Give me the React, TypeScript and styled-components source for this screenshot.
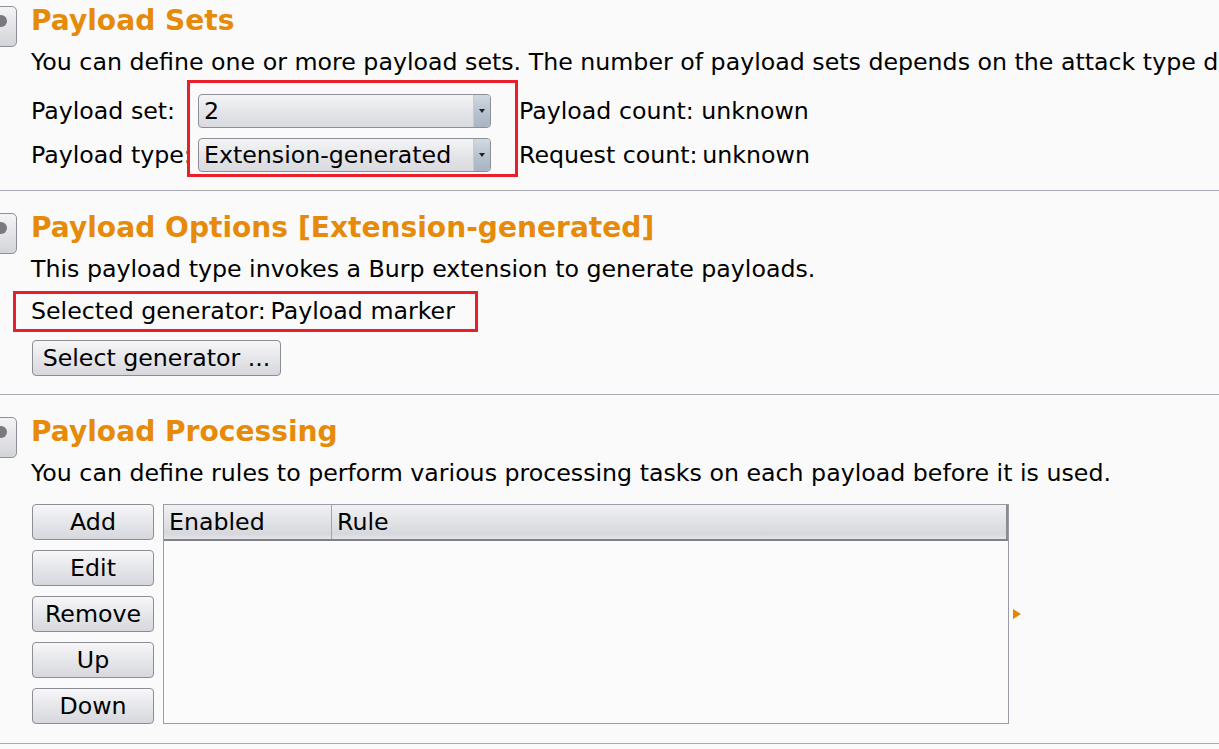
import React from "react";
import styled, { createGlobalStyle } from "styled-components";

const Global = createGlobalStyle`
  html, body {
    margin: 0;
    padding: 0;
    background: #fafafa;
    overflow: hidden;
  }
  body {
    font-family: "DejaVu Sans", Verdana, sans-serif;
    font-size: 23.7px;
    color: #000;
  }
`;

const Page = styled.div`
  width: 1219px;
  height: 749px;
  background: #fafafa;
  overflow: hidden;
  display: flex;
  flex-direction: column;
`;

const Section = styled.section<{ $top: number; $bottom: number }>`
  display: flex;
  flex-direction: column;
  align-items: flex-start;
  padding: ${(p) => p.$top}px 0 ${(p) => p.$bottom}px 31px;
  border-bottom: 1px solid #a8aab3;
`;

const HeaderRow = styled.div`
  display: flex;
  align-items: flex-start;
  height: 34px;
  margin-left: -54px;
`;

const HelpIcon = styled.div`
  width: 40px;
  height: 41px;
  margin-top: 2px;
  box-sizing: border-box;
  border: 1px solid #8e8f98;
  border-radius: 5px;
  background: linear-gradient(#f4f4f6, #d3d4d9);
  display: flex;
  padding: 8px 0 0 17px;
  flex-shrink: 0;
`;

const HelpDot = styled.span`
  width: 12px;
  height: 12px;
  border-radius: 50%;
  background: #7a7a7e;
`;

const Title = styled.h2`
  margin: 0 0 0 14px;
  font-size: 28.1px;
  line-height: 34px;
  font-weight: bold;
  color: #e68a0a;
  white-space: nowrap;
`;

const Desc = styled.p`
  margin: 10px 0 0 0;
  line-height: 28px;
  white-space: nowrap;
`;

const SetsRow = styled.div`
  display: flex;
  align-items: flex-start;
  margin-top: 4px;
`;

const FieldColumn = styled.div<{ $width?: number }>`
  display: flex;
  flex-direction: column;
  gap: 10px;
  padding-top: 14px;
  width: ${(p) => (p.$width ? `${p.$width}px` : "auto")};
`;

const FieldText = styled.div`
  height: 34px;
  line-height: 34px;
  white-space: nowrap;
`;

const Highlight = styled.div<{ $pad: string; $width?: number; $shift?: number; $gapTop?: number }>`
  border: 3px solid #e8202c;
  padding: ${(p) => p.$pad};
  box-sizing: border-box;
  ${(p) => (p.$width ? `width: ${p.$width}px;` : "")}
  margin-left: ${(p) => p.$shift ?? 0}px;
  margin-top: ${(p) => p.$gapTop ?? 0}px;
`;

const ComboColumn = styled.div`
  display: flex;
  flex-direction: column;
  gap: 10px;
`;

const Combo = styled.div`
  width: 293px;
  height: 34px;
  box-sizing: border-box;
  border: 1px solid #8d8e98;
  border-radius: 4px;
  background: linear-gradient(#f5f5f7, #e2e3e7 60%, #d9dadf);
  display: flex;
  align-items: stretch;
  overflow: hidden;
`;

const ComboValue = styled.div`
  flex: 1;
  padding-left: 5px;
  line-height: 32px;
  white-space: nowrap;
`;

const ComboArrow = styled.div`
  width: 16px;
  border-left: 1px solid #c6ccd4;
  background: linear-gradient(#d2d9e1, #b5c0cc 60%, #a9b5c3);
  display: flex;
  align-items: center;
  justify-content: center;
`;

const ArrowGlyph = styled.span`
  width: 0;
  height: 0;
  border-left: 3px solid transparent;
  border-right: 3px solid transparent;
  border-top: 4px solid #222;
`;

const ValueColumn = styled(FieldColumn)`
  margin-left: 1px;
`;

const GeneratorLine = styled.div`
  line-height: 35px;
  white-space: nowrap;
`;

const ButtonSlot = styled.div`
  margin-top: 8px;
  margin-left: 1px;
`;

const Button = styled.button<{ $width: number }>`
  width: ${(p) => p.$width}px;
  height: 36px;
  box-sizing: border-box;
  border: 1px solid #8c8d95;
  border-radius: 4px;
  background: linear-gradient(#f7f7f9, #e4e5e9 55%, #d6d8dd);
  font-family: inherit;
  font-size: 23.7px;
  color: #000;
  padding: 0;
  line-height: 34px;
  white-space: nowrap;
`;

const ProcessingRow = styled.div`
  display: flex;
  align-items: center;
  margin-top: 17px;
  margin-left: 1px;
`;

const ButtonColumn = styled.div`
  display: flex;
  flex-direction: column;
  gap: 10px;
`;

const Table = styled.div`
  margin-left: 9px;
  width: 846px;
  height: 220px;
  box-sizing: border-box;
  border: 1px solid #9b9ca7;
  background: #fbfbfb;
  display: flex;
  flex-direction: column;
`;

const TableHeader = styled.div`
  display: grid;
  grid-template-columns: 168px 1fr 2px;
  height: 36px;
  box-sizing: border-box;
  border-bottom: 2px solid #7f808a;
  background: linear-gradient(#f1f1f3, #e1e2e6 50%, #d7d8dd 85%, #e4e5e8);
`;

const HeaderCell = styled.div<{ $last?: boolean }>`
  padding-left: 5px;
  line-height: 34px;
  border-right: ${(p) => (p.$last ? "none" : "1px solid #a2a3ad")};
  white-space: nowrap;
`;

const HeaderEdge = styled.div`
  background: #8a8b94;
`;

const ExpandMarker = styled.span`
  margin-left: 4px;
  width: 0;
  height: 0;
  border-top: 5px solid transparent;
  border-bottom: 5px solid transparent;
  border-left: 8px solid #e38500;
`;

function SectionHeader({ title }: { title: string }) {
  return (
    <HeaderRow>
      <HelpIcon>
        <HelpDot />
      </HelpIcon>
      <Title>{title}</Title>
    </HeaderRow>
  );
}

export default function App() {
  return (
    <Page>
      <Global />
      <Section $top={4} $bottom={13}>
        <SectionHeader title="Payload Sets" />
        <Desc>
          You can define one or more payload sets. The number of payload sets depends on the attack type defined in the Positions tab.
        </Desc>
        <SetsRow>
          <FieldColumn $width={156}>
            <FieldText>Payload set:</FieldText>
            <FieldText>Payload type:</FieldText>
          </FieldColumn>
          <Highlight $pad="11px 24px 2px 8px">
            <ComboColumn>
              <Combo>
                <ComboValue>2</ComboValue>
                <ComboArrow>
                  <ArrowGlyph />
                </ComboArrow>
              </Combo>
              <Combo>
                <ComboValue>Extension-generated</ComboValue>
                <ComboArrow>
                  <ArrowGlyph />
                </ComboArrow>
              </Combo>
            </ComboColumn>
          </Highlight>
          <ValueColumn>
            <FieldText>Payload count: unknown</FieldText>
            <FieldText>Request count:&thinsp;unknown</FieldText>
          </ValueColumn>
        </SetsRow>
      </Section>

      <Section $top={20} $bottom={18}>
        <SectionHeader title="Payload Options [Extension-generated]" />
        <Desc>This payload type invokes a Burp extension to generate payloads.</Desc>
        <Highlight $pad="0 0 0 15px" $width={465} $shift={-18} $gapTop={8}>
          <GeneratorLine>Selected generator:&thinsp;Payload marker</GeneratorLine>
        </Highlight>
        <ButtonSlot>
          <Button $width={249}>Select generator ...</Button>
        </ButtonSlot>
      </Section>

      <Section $top={20} $bottom={19}>
        <SectionHeader title="Payload Processing" />
        <Desc>You can define rules to perform various processing tasks on each payload before it is used.</Desc>
        <ProcessingRow>
          <ButtonColumn>
            <Button $width={122}>Add</Button>
            <Button $width={122}>Edit</Button>
            <Button $width={122}>Remove</Button>
            <Button $width={122}>Up</Button>
            <Button $width={122}>Down</Button>
          </ButtonColumn>
          <Table>
            <TableHeader>
              <HeaderCell>Enabled</HeaderCell>
              <HeaderCell $last>Rule</HeaderCell>
              <HeaderEdge />
            </TableHeader>
          </Table>
          <ExpandMarker />
        </ProcessingRow>
      </Section>
    </Page>
  );
}
